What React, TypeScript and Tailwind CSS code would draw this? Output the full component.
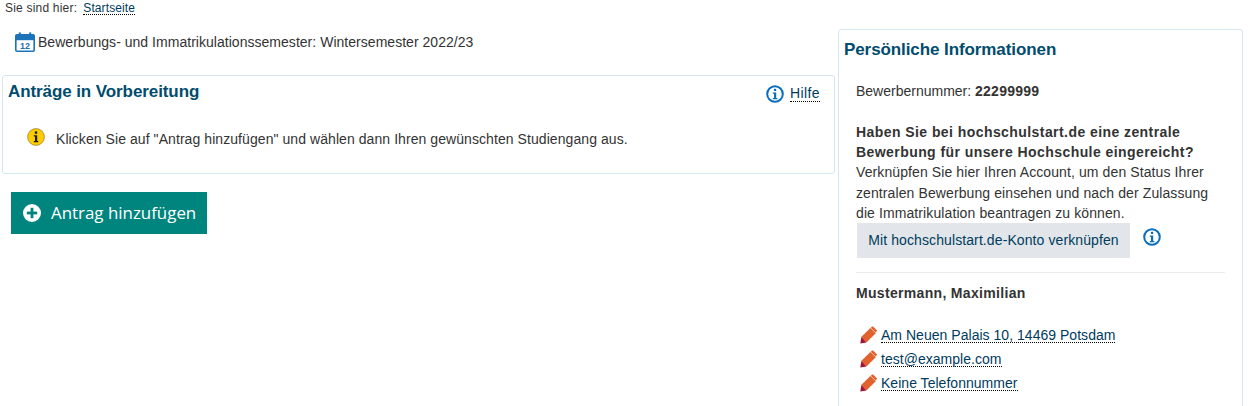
import React from 'react';

const InfoIcon = ({ className }: { className: string }) => (
  <svg viewBox="0 0 18 18" className={className}>
    <circle cx="9" cy="9" r="7.8" fill="none" stroke="#0a6ebd" strokeWidth="2" />
    <rect x="7.9" y="3.8" width="2.3" height="2.3" rx="0.6" fill="#0a6ebd" />
    <path d="M6.8 7.4h3.4v5.6h1.2v1.3H6.8V13H8V8.7H6.8z" fill="#0a6ebd" />
  </svg>
);

const Pencil = () => (
  <svg viewBox="0 0 17 18" className="w-[17px] h-[18px] shrink-0 -mt-[2px]">
    <path d="M1.4 10.8 10.4 2l5.4 5.2-9.4 9.2z" fill="#e2622d" />
    <path d="M11.6 0.9c.6-.6 1.4-.6 2 0l2.9 2.8c.6.6.6 1.3 0 1.9l-.8.8-5-4.7z" fill="#e2622d" />
    <path d="M1.4 10.8 0.3 17.6l6.1-1.2z" fill="#a5123a" />
  </svg>
);

const Calendar = () => (
  <svg viewBox="0 0 20 20" className="w-5 h-5 shrink-0">
    <rect x="0.8" y="2.8" width="18.4" height="16.4" rx="1.2" fill="#ffffff" stroke="#1b74b8" strokeWidth="1.6" />
    <rect x="0.8" y="2.8" width="18.4" height="5.4" fill="#1b74b8" />
    <rect x="3.8" y="0.4" width="2" height="4" fill="#1b74b8" />
    <rect x="14.2" y="0.4" width="2" height="4" fill="#1b74b8" />
    <text x="10" y="17" textAnchor="middle" fontSize="9" fontWeight="700" fill="#1b6fb0" fontFamily="Liberation Sans, sans-serif">12</text>
  </svg>
);

const links = ['Am Neuen Palais 10, 14469 Potsdam', 'test@example.com', 'Keine Telefonnummer'];

export default function App() {
  return (
    <div className="w-[1249px] h-[406px] overflow-hidden bg-white text-[14px] text-[#333333] font-['Liberation_Sans',Arial,sans-serif]">
      <div className="flex">
        {/* Left column */}
        <div className="w-[838px] shrink-0 pl-[2px] pr-[3px]">
          <div className="h-[15px] pt-[1px] pl-[3px] text-[12px] leading-[15px] tracking-[0.2px] text-[#333333]">
            Sie sind hier:&nbsp;&thinsp;<a className="text-[#003b5c] border-b border-dotted border-black leading-[12px] inline-block tracking-[0.1px]">Startseite</a>
          </div>

          <div className="flex items-center gap-[3px] pl-[13px] mt-[17px] h-[20px] leading-[20px] tracking-[0.03px]">
            <Calendar />
            <span>Bewerbungs- und Immatrikulationssemester: Wintersemester 2022/23</span>
          </div>

          <div className="mt-[23px] h-[99px] border border-[#d5e8f0] rounded-[3px]">
            <div className="flex justify-between pl-[5px] pr-[14px] pt-[6px]">
              <h2 className="text-[17px] leading-[20px] tracking-[-0.09px] font-bold text-[#004c6d]">Anträge in Vorbereitung</h2>
              <div className="flex items-center gap-[6px] mt-[2px] h-[20px]">
                <InfoIcon className="w-[18px] h-[18px]" />
                <a className="text-[#003b5c] border-b border-dotted border-black leading-[15px] tracking-[0.4px]">Hilfe</a>
              </div>
            </div>
            <div className="flex items-center pl-[24px] mt-[23px] h-[24px]">
              <svg viewBox="0 0 18 18" className="w-[18px] h-[18px] shrink-0 -mt-[4px]">
                <circle cx="9" cy="9" r="8.4" fill="#ffcc00" stroke="#8a7a30" strokeWidth="0.7" />
                <rect x="7.8" y="3.4" width="2.4" height="2.4" fill="#1a1a1a" />
                <path d="M6.8 7.3h3.4v5.6h1.1v1.3H6.8v-1.3H8V8.6H6.8z" fill="#1a1a1a" />
              </svg>
              <span className="ml-[11px] tracking-[0.07px]">Klicken Sie auf "Antrag hinzufügen" und wählen dann Ihren gewünschten Studiengang aus.</span>
            </div>
          </div>

          <button className="mt-[18px] ml-[9px] w-[196px] h-[42px] bg-[#00847e] text-white flex items-center pl-[12px] gap-[10px] font-['Open_Sans',sans-serif] text-[16.9px]">
            <svg viewBox="0 0 18 18" className="w-[18px] h-[18px] shrink-0">
              <circle cx="9" cy="9" r="9" fill="#ffffff" />
              <rect x="7.6" y="3.8" width="2.8" height="10.4" fill="#00847e" />
              <rect x="3.8" y="7.6" width="10.4" height="2.8" fill="#00847e" />
            </svg>
            Antrag hinzufügen
          </button>
        </div>

        {/* Right column */}
        <div className="mt-[29px] w-[405px] h-[400px] shrink-0 border border-[#d5e8f0] rounded-[3px]">
          <h2 className="pl-[5px] pt-[10px] text-[17px] leading-[20px] tracking-[-0.09px] font-bold text-[#004c6d]">Persönliche Informationen</h2>
          <div className="pl-[17px] pr-[17px]">
            <p className="mt-[21px] leading-[20px]">Bewerbernummer: <b className="tracking-[0.25px]">22299999</b></p>
            <p className="mt-[21px] font-bold leading-[20px] tracking-[0.43px]">Haben Sie bei hochschulstart.de eine zentrale Bewerbung für unsere Hochschule eingereicht?</p>
            <p className="leading-[20.5px] tracking-[0.1px]">Verknüpfen Sie hier Ihren Account, um den Status Ihrer zentralen Bewerbung einsehen und nach der Zulassung die Immatrikulation beantragen zu können.</p>
            <div className="flex items-start mt-[-1px] ml-[1px]">
              <button className="w-[273px] h-[35px] bg-[#e2e6ea] text-[#003b5c] text-center tracking-[0.1px]">Mit hochschulstart.de-Konto verknüpfen</button>
              <InfoIcon className="w-[18px] h-[18px] ml-[13px] mt-[5px]" />
            </div>
            <hr className="mt-[14px] border-t border-[#e8ecef]" />
            <p className="mt-[10px] font-bold leading-[20px] tracking-[0.32px]">Mustermann, Maximilian</p>
            <ul className="mt-[23px] flex flex-col gap-[4px]">
              {links.map((link) => (
                <li key={link} className="flex items-center gap-[4px] h-[20px] pl-[4px]">
                  <Pencil />
                  <a className="text-[#003b5c] border-b border-dotted border-black leading-[14px] tracking-[0.03px]">{link}</a>
                </li>
              ))}
            </ul>
          </div>
        </div>
      </div>
    </div>
  );
}
